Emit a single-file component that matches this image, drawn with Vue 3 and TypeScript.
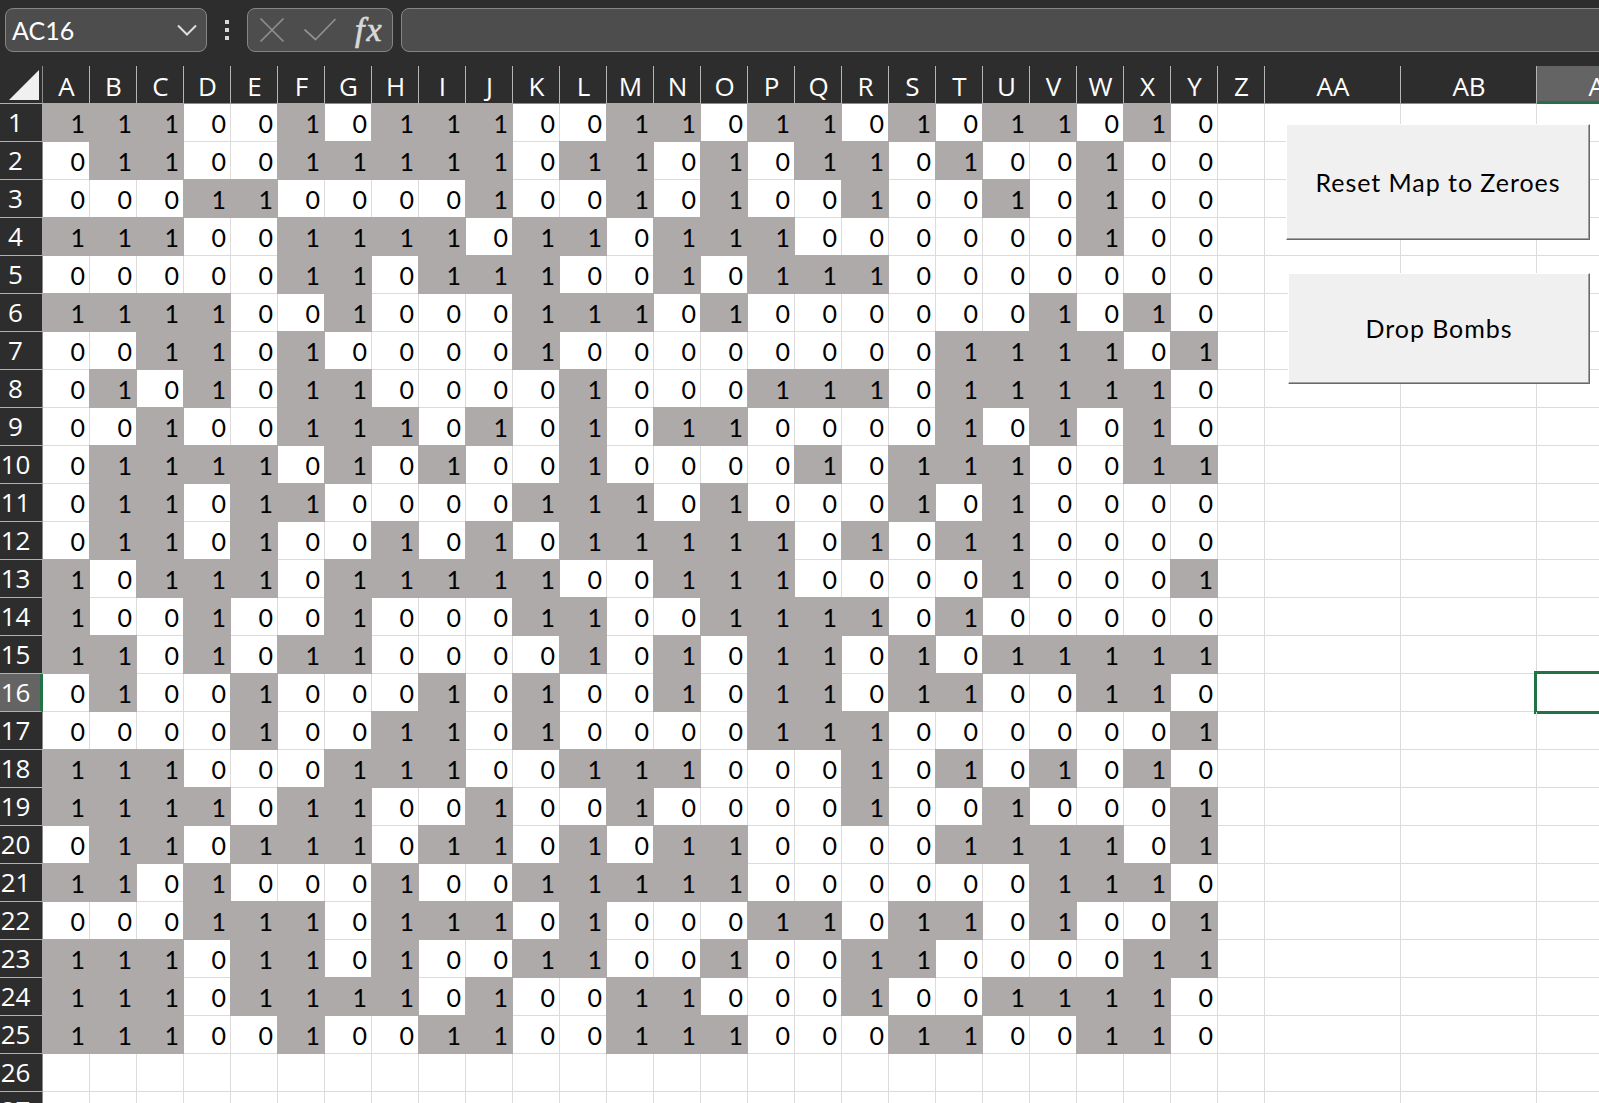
<script setup lang="ts">
const columns: string[] = [...'ABCDEFGHIJKLMNOPQRSTUVWXYZ', 'AA', 'AB', 'AC']

const map: string[] = [
  '1110010111001101101011010',
  '0110011111011010110100100',
  '0001100001001010010010100',
  '1110011110110111000000100',
  '0000011011100101110000000',
  '1111001000111010000001010',
  '0011010000100000000111101',
  '0101011000010001110111110',
  '0010011101010110000101010',
  '0111101010010000101110011',
  '0110110000111010001010000',
  '0110100101011111010110000',
  '1011101111100111000010001',
  '1001001000110011110100000',
  '1101011000010101101011111',
  '0100100010100101101100110',
  '0000100110100001110000001',
  '1110001110011100010101010',
  '1111011001001000010010001',
  '0110111011010110000111101',
  '1101000100111110000001110',
  '0001110111010001101101001',
  '1110110100110010011000011',
  '1110111101001100010011110',
  '1110010011001110001100110',
]

const rowCount = 27
const selected = { row: 16, column: 'AC' }

const valueAt = (row: number, col: number): string => map[row - 1]?.[col] ?? ''
</script>

<template>
  <div class="app">
    <header class="bar">
      <div class="box name-box">
        <span>AC16</span>
        <svg width="20" height="12" viewBox="0 0 20 12"><path d="M1 1.5 10 10.5 19 1.5" /></svg>
      </div>
      <div class="dots"><i></i><i></i><i></i></div>
      <div class="box tools">
        <svg class="dim" width="26" height="26" viewBox="0 0 26 26"><path d="M1.5 1.5 24.5 24.5M24.5 1.5 1.5 24.5" /></svg>
        <svg class="dim check" width="34" height="26" viewBox="0 0 34 26"><path d="M1.5 12.5 12.5 22.5 32.5 2" /></svg>
        <span class="fx"><b>f</b><b class="x">x</b></span>
      </div>
      <div class="box formula"></div>
    </header>

    <main class="sheet">
      <div class="row head">
        <div class="corner"><svg width="30" height="30" viewBox="0 0 30 30"><path d="M30 0V30H0Z" /></svg></div>
        <div
          v-for="c in columns"
          :key="c"
          class="col-head"
          :class="{ wide: c.length > 1, active: c === selected.column }"
        >{{ c }}</div>
      </div>
      <div v-for="r in rowCount" :key="r" class="row">
        <div class="row-head" :class="{ active: r === selected.row }"><span>{{ r }}</span></div>
        <div
          v-for="(c, i) in columns"
          :key="c"
          class="cell"
          :class="{
            wide: c.length > 1,
            wall: valueAt(r, i) === '1',
            current: r === selected.row && c === selected.column,
          }"
        >{{ valueAt(r, i) }}</div>
      </div>
      <button class="control reset"><span>Reset Map to Zeroes</span></button>
      <button class="control drop"><span>Drop Bombs</span></button>
    </main>
  </div>
</template>

<style>
body {
  margin: 0;
  overflow: hidden;
}
</style>

<style scoped>
.app {
  width: 1599px;
  height: 1103px;
  overflow: hidden;
  background: #fff;
  font-family: Lato, 'Liberation Sans', sans-serif;
}
.app * {
  box-sizing: border-box;
}
.bar {
  display: flex;
  height: 66px;
  padding: 8px 0 0 5px;
  background: #2d2d2d;
}
.box {
  height: 44px;
  flex: none;
  border: 1px solid #858585;
  border-radius: 8px;
  background: #4d4d4d;
  display: flex;
  align-items: center;
}
.name-box {
  width: 202px;
  padding: 0 9px 0 6px;
  justify-content: space-between;
  color: #fff;
  font-size: 25px;
}
svg {
  display: block;
  fill: none;
  stroke: #dedede;
  stroke-width: 2;
}
.dots {
  width: 40px;
  height: 44px;
  flex: none;
  display: flex;
  flex-direction: column;
  align-items: center;
  justify-content: center;
  gap: 4px;
}
.dots i {
  width: 4px;
  height: 4px;
  background: #d8d8d8;
}
.tools {
  width: 146px;
  padding-left: 11px;
}
.dim {
  flex: none;
  stroke: #8f8f8f;
  stroke-width: 1.7;
}
.check {
  margin-left: 18px;
}
.fx {
  margin-left: 18px;
  color: #d8d8d8;
  font: italic 34px/40px 'Liberation Serif', serif;
  -webkit-text-stroke: 0.7px #d8d8d8;
  display: flex;
}
.fx b {
  font-weight: 400;
}
.fx .x {
  margin-left: 2px;
}
.formula {
  width: 1220px;
  margin-left: 8px;
}
.sheet {
  position: relative;
  width: 1673px;
}
.row {
  display: flex;
  height: 38px;
}
.corner,
.row-head {
  width: 43px;
  flex: none;
  background: #2d2d2d;
  border-right: 1px solid #8c8c8c;
  border-bottom: 1px solid #b0b0b0;
}
.corner {
  padding: 4px 0 0 9px;
}
.corner svg {
  fill: #f0f0f0;
  stroke: none;
}
.col-head {
  width: 47px;
  flex: none;
  padding-left: 1px;
  background: #2d2d2d;
  border-right: 1px solid #b5b5b5;
  border-bottom: 1px solid #8c8c8c;
  color: #fff;
  font: 26px/40px 'Open Sans', 'Noto Sans', sans-serif;
  text-align: center;
}
.wide.wide {
  width: 136px;
}
.col-head.active {
  background: #646464;
  border-bottom: 3px solid #217346;
}
.row-head {
  color: #fff;
  font: 26px/37px 'Open Sans', 'Noto Sans', sans-serif;
  text-align: center;
}
.row-head span {
  display: inline-block;
  margin-left: -11px;
}
.row-head.active {
  background: #646464;
  border-right: 3px solid #217346;
}
.row-head.active span {
  margin-left: -9px;
}
.cell {
  width: 47px;
  flex: none;
  padding-right: 4px;
  border-right: 1px solid #dcdcdc;
  border-bottom: 1px solid #dcdcdc;
  color: #000;
  font-size: 25px;
  line-height: 39px;
  text-align: right;
}
.wall {
  background: #aeaaa9;
  border-color: #aeaaa9;
  box-shadow: -1px -1px 0 #aeaaa9, -1px 0 0 #aeaaa9, 0 -1px 0 #aeaaa9;
}
.current {
  background: #fff;
  border-bottom-color: #217346;
  box-shadow: -3px -3px 0 #217346, 0 -3px 0 #217346, -3px 2px 0 #217346, 0 2px 0 #217346;
}
.control {
  position: absolute;
  left: 1286px;
  top: 58px;
  width: 304px;
  height: 116px;
  padding: 0;
  border: 1px solid;
  border-color: #fff #696969 #696969 #fff;
  box-shadow: inset -1px -1px 0 #a0a0a0;
  background: #f0f0f0;
  color: #000;
  font: 25px Lato, sans-serif;
  letter-spacing: 0.95px;
}
.drop {
  left: 1288px;
  top: 207px;
  width: 302px;
  height: 111px;
  padding-bottom: 2px;
}
</style>
